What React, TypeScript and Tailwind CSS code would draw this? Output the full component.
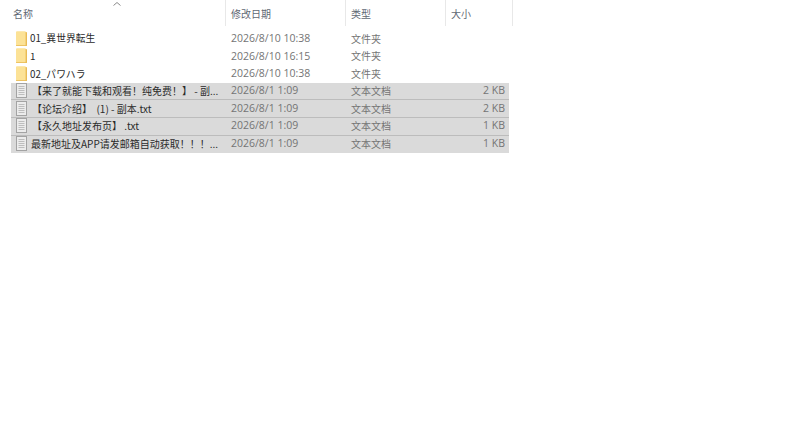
const font = "font-['Noto_Sans_CJK_SC','Noto_Sans_CJK_JP',sans-serif]";
const latin = "pt-[1px] font-['Open_Sans','Noto_Sans_CJK_SC',sans-serif] text-[10.5px] text-[#747474]";

const folders = [
  { name: '01_異世界転生', date: '2026/8/10 10:38' },
  { name: '1', date: '2026/8/10 16:15' },
  { name: '02_パワハラ', date: '2026/8/10 10:38' },
];

const files = [
  { name: '【来了就能下载和观看！纯免费！】 - 副...', size: '2 KB', gap: 'gap-[5px]' },
  { name: '【论坛介绍】  (1) - 副本.txt', size: '2 KB', gap: 'gap-[5px]' },
  { name: '【永久地址发布页】 .txt', size: '1 KB', gap: 'gap-[5px]' },
  { name: '最新地址及APP请发邮箱自动获取！！！...', size: '1 KB', gap: 'gap-[4px]' },
];

function FolderIcon() {
  return (
    <svg width="11" height="15" viewBox="0 0 11 15" className="shrink-0">
      <path d="M0 1.2 Q0 0.2 1 0.2 H9 L10.5 1.5 V15 H1 Q0 15 0 14 Z" fill="#fce296" />
      <path d="M9.6 0.8 L11 1.6 V14.6 L9.6 15 Z" fill="#e9bb55" />
      <path d="M0 14.2 H11 V15 H0 Z" fill="#e9bb55" />
    </svg>
  );
}

function TextFileIcon() {
  return (
    <svg width="11" height="15" viewBox="0 0 11 15" className="shrink-0">
      <rect x="0.5" y="0.5" width="10" height="14" fill="#ececec" stroke="#a3a3a3" />
      <path d="M2.5 3.5 H8.5 M2.5 5.5 H8.5 M2.5 7.5 H8.5 M2.5 9.5 H8.5 M2.5 11.5 H8.5" stroke="#bdbdbd" />
    </svg>
  );
}

export default function App() {
  return (
    <div className={`h-[431px] w-[800px] overflow-hidden bg-white ${font} text-[10px] text-[#3a3a3a]`}>
      <div className="relative flex h-[26px] w-[513px] text-[#5f6874]">
        <svg width="8" height="4" viewBox="0 0 8 4" className="absolute left-[113px] top-[2px]">
          <path d="M0.5 3.5 L4 0.5 L7.5 3.5" fill="none" stroke="#8a8a8a" />
        </svg>
        <div className="flex w-[226px] items-center border-r border-[#e8e8e8] pl-[13px]">名称</div>
        <div className="flex w-[120px] items-center border-r border-[#e8e8e8] pl-[5px]">修改日期</div>
        <div className="flex w-[100px] items-center border-r border-[#e8e8e8] pl-[5px]">类型</div>
        <div className="flex w-[67px] items-center border-r border-[#e8e8e8] pl-[5px]">大小</div>
      </div>
      <div className="ml-[11px] mt-[4px] w-[498px]">
        {folders.map((folder) => (
          <div key={folder.name} className="flex h-[17.6px] items-center pb-[1px]">
            <div className="flex w-[215px] items-center gap-[4px] pl-[5px] text-[#2a2a2a]">
              <FolderIcon />
              <span className="ml-[-1px] pt-[1px] text-[9.8px]">{folder.name}</span>
            </div>
            <div className={`w-[120px] pl-[5px] ${latin}`}>{folder.date}</div>
            <div className="pl-[5px] text-[#747474]">文件夹</div>
          </div>
        ))}
        {files.map((file) => (
          <div key={file.name} className="flex h-[17.6px] items-center border-b border-[#bcbcbc] bg-[#dadada] pb-[1px] last:border-b-0">
            <div className={`flex w-[215px] items-center ${file.gap} pl-[5px] text-[#2a2a2a]`}>
              <TextFileIcon />
              <span className="whitespace-pre">{file.name}</span>
            </div>
            <div className={`w-[120px] pl-[5px] ${latin}`}>2026/8/1 1:09</div>
            <div className="w-[100px] pl-[5px] text-[#747474]">文本文档</div>
            <div className={`flex-1 pr-[4px] text-right ${latin}`}>{file.size}</div>
          </div>
        ))}
      </div>
    </div>
  );
}
